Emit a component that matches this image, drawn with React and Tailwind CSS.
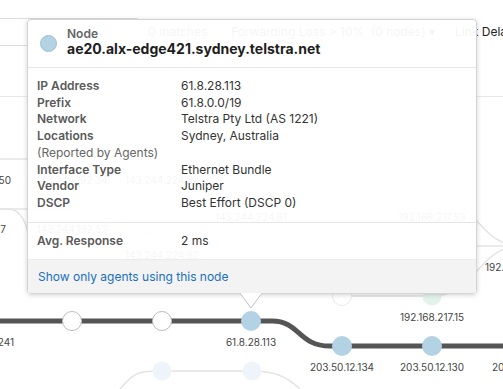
const FONT = { fontFamily: "Inter, 'Noto Sans', sans-serif" };

const ROWS = [
  ["IP Address", "61.8.28.113"],
  ["Prefix", "61.8.0.0/19"],
  ["Network", "Telstra Pty Ltd (AS 1221)"],
  ["Locations", "Sydney, Australia"],
  ["(Reported by Agents)", "", true],
  ["Interface Type", "Ethernet Bundle"],
  ["Vendor", "Juniper"],
  ["DSCP", "Best Effort (DSCP 0)"],
];

// graph labels: [text, x, y, anchor]
const LABELS = [
  ["143.244.192.50", 11, 184, "end"],
  ["143.244.192.34", 72, 184, "middle"],
  ["143.244.224.84", 162, 184, "middle"],
  ["143.244.224.81", 251, 221, "middle"],
  ["192.168.217.59", 432, 221, "middle"],
  ["143.244.192.7", 6, 233, "end"],
  ["143.244.192.52", 72, 233, "middle"],
  ["143.244.224.82", 162, 259, "middle"],
  ["192.168.217.140", 485, 271, "start"],
  ["192.168.217.15", 432, 321, "middle"],
  ["61.8.28.241", 14, 346, "end"],
  ["61.8.28.113", 251, 346, "middle"],
  ["203.50.12.134", 342, 371, "middle"],
  ["203.50.12.130", 432, 371, "middle"],
  ["203.50.12.1", 492, 371, "start"],
];

function Graph() {
  return (
    <svg className="absolute inset-0" width="503" height="389" viewBox="0 0 503 389">
      {/* faded links */}
      <g fill="none" stroke="#e4e4e4" strokeWidth="1.5">
        <path d="M-18 159 H162 C205 159 208 196 251 196 H432 C478 196 476 246 522 246" />
        <path d="M0 209 H8 Q26 209 30 245 Q34 259 72 259 H162" />
        <path d="M-18 209 H72 C115 209 118 234 162 234" />
        <path d="M432 246 H522" />
        <path d="M342 296 H432 C478 296 476 246 522 246" />
        <path d="M120 389 C135 371 140 371 162 371 H252 C272 371 285 375 300 389" />
      </g>
      <g>
        <circle cx="342" cy="296" r="9.5" fill="#fff" stroke="#eaeaea" strokeWidth="1" />
        <circle cx="432" cy="296" r="9.5" fill="#e3f3ea" />
        <circle cx="162" cy="371" r="9.5" fill="#eef4f9" />
        <circle cx="252" cy="371" r="9.5" fill="#eef4f9" />
      </g>
      {/* highlighted path */}
      <path d="M-10 321 H272 C300 321 298 346 330 346 H510" fill="none" stroke="#555" strokeWidth="5" />
      <circle cx="72" cy="321" r="9.5" fill="#fff" stroke="#bdbdbd" strokeWidth="1" />
      <circle cx="162" cy="321" r="9.5" fill="#fff" stroke="#bdbdbd" strokeWidth="1" />
      <circle cx="251" cy="321" r="10" fill="#b3d2e4" />
      <circle cx="342" cy="346" r="10" fill="#b3d2e4" />
      <circle cx="432" cy="346" r="10" fill="#b3d2e4" />
      <g fill="#444" fontSize="10" style={FONT}>
        {LABELS.map(([t, x, y, a]) => (
          <text key={t} x={x} y={y} textAnchor={a}>{t}</text>
        ))}
      </g>
    </svg>
  );
}

function NodeTooltip() {
  return (
    <div className="absolute left-[27px] top-[19px] w-[450px]">
      <div className="rounded-[4px] border border-[#d4d4d4] bg-white/[0.95] shadow-[0_1px_5px_rgba(0,0,0,0.18)] overflow-hidden">
        {/* header */}
        <div className="h-[48px] flex items-center gap-[10px] pl-[12px] border-b border-[#e6e6e6]">
          <div className="w-[17px] h-[17px] rounded-full bg-[#b3d2e4] border border-[#9fc0d4] shrink-0"></div>
          <div className="flex flex-col pb-[2px]">
            <span className="text-[12px] leading-[13px] font-semibold text-[#666]">Node</span>
            <span className="text-[14px] leading-[18px] font-bold text-[#1e1e1e]">ae20.alx-edge421.sydney.telstra.net</span>
          </div>
        </div>

        {/* details */}
        <div className="px-[9px] pt-[10px] pb-[10px] border-b border-[#e6e6e6] text-[12px] leading-[16.7px]">
          {ROWS.map(([label, value, muted]) => (
            <div key={label} className="flex">
              <div className={`w-[144px] shrink-0 ${muted ? "text-[#666]" : "font-semibold text-[#595959]"}`}>{label}</div>
              <div className="text-[#333]">{value}</div>
            </div>
          ))}
        </div>

        <div className="px-[9px] pt-[10px] pb-[10px] text-[12px] leading-[16.7px] flex">
          <div className="w-[144px] shrink-0 font-semibold text-[#595959]">Avg. Response</div>
          <div className="text-[#333]">2 ms</div>
        </div>

        {/* footer */}
        <div className="h-[34px] flex items-center px-[10px] bg-[#f2f2f2]/[0.95] border-t border-[#ececec]">
          <span className="text-[12px] text-[#1a6fc0]">Show only agents using this node</span>
        </div>
      </div>
      <svg className="absolute left-[213px] top-full -mt-[1px]" width="22" height="16" viewBox="0 0 22 16">
        <polygon points="0,0 11,15 22,0" fill="#fff" />
        <polyline points="0,0 11,15 22,0" fill="none" stroke="#c4c4c4" strokeWidth="1" />
      </svg>
    </div>
  );
}

export default function App() {
  return (
    <div className="relative w-[503px] h-[389px] overflow-hidden bg-white" style={FONT}>
      <Graph />

      {/* toolbar behind the tooltip */}
      <div className="relative h-[97px] border-b border-[#e8e8e8] pt-[18px]">
        <div className="flex items-center text-[12px] text-[#333] whitespace-nowrap">
          <div className="w-[139px] h-[28px] border border-l-0 border-[#dcdcdc] rounded-r-[3px] shrink-0"></div>
          <span className="ml-[9px] shrink-0">0 matches</span>
          <span className="ml-[24px] shrink-0">Forwarding Loss &gt; 10%&nbsp; (0 nodes) ▾</span>
          <span className="ml-[20px] shrink-0 text-[#222]">Link Delay</span>
        </div>
      </div>

      <NodeTooltip />
    </div>
  );
}
